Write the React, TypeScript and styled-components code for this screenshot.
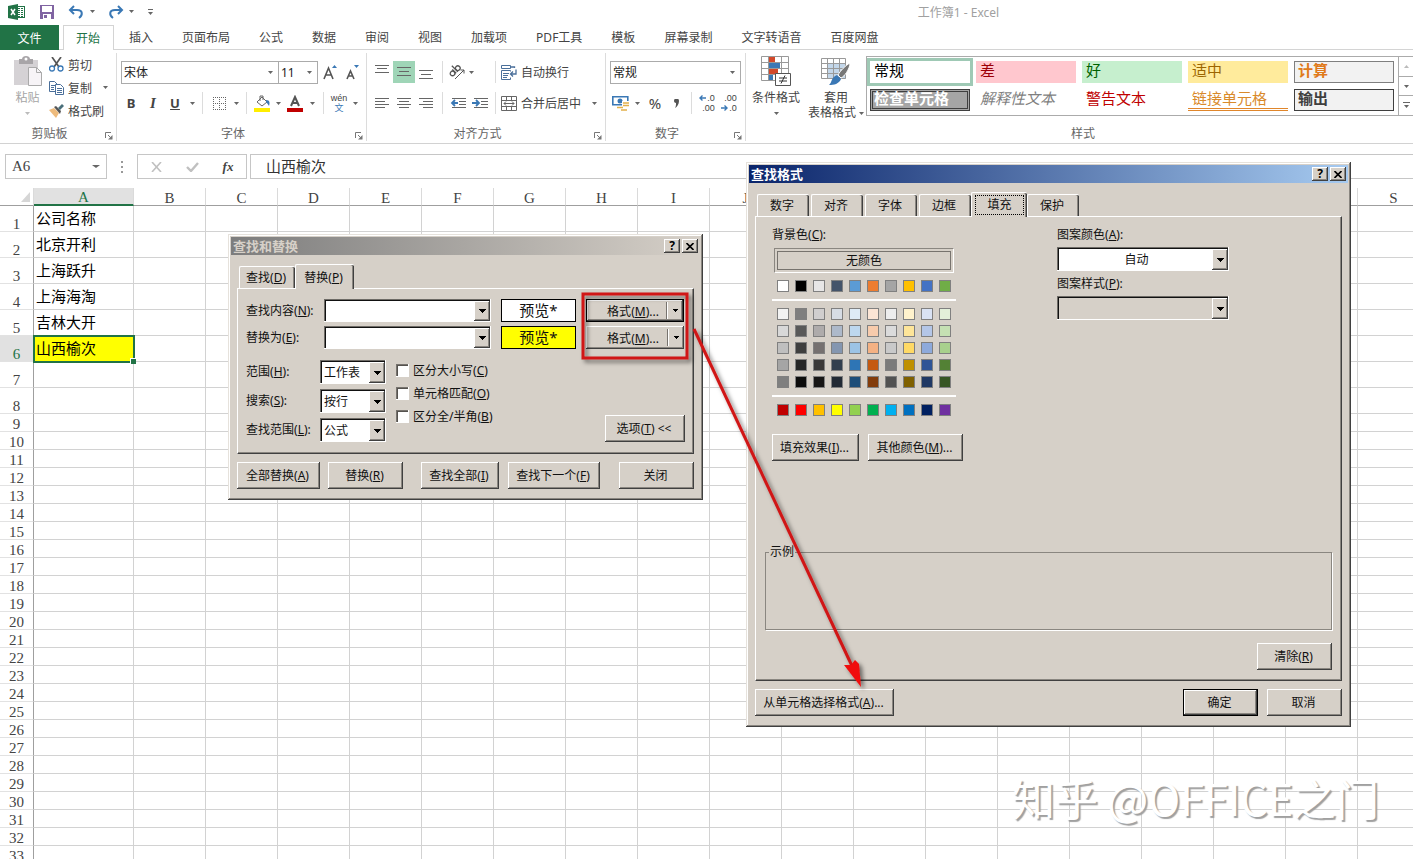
import React from "react";
import styled, { createGlobalStyle, css } from "styled-components";

const UI = `"Noto Sans", "Noto Sans CJK SC", sans-serif`;
const CELL = `"Liberation Serif", "Noto Sans CJK SC", serif`;
const FACE = "#d6d0c8";

const Global = createGlobalStyle`
  *, *::before, *::after { box-sizing: border-box; }
  body { margin: 0; background: #fff; font-family: ${UI}; font-size: 12px; color: #444; }
  button, input, select { font: inherit; color: inherit; margin: 0; border-radius: 0; }
`;

const raised = css`
  box-shadow: inset -1px -1px #404040, inset 1px 1px #fff, inset -2px -2px #8a8680;
`;
const sunken = css`
  box-shadow: inset -1px -1px #fff, inset 1px 1px #6e6b66, inset 2px 2px #111;
`;

const Page = styled.main`
  position: relative;
  height: 100vh;
  overflow: hidden;
`;

/* ---------- title bar ---------- */
const TitleBar = styled.header`
  display: flex;
  align-items: center;
  height: 25px;
  padding: 0 0 2px 8px;
`;
const QuickButton = styled.button<{ $w: number; $gap?: number }>`
  display: flex;
  justify-content: center;
  align-items: center;
  width: ${(p) => p.$w}px;
  height: 20px;
  margin-left: ${(p) => p.$gap ?? 0}px;
  padding: 0;
  border: 0;
  background: none;
`;
const BookTitle = styled.h1`
  flex: 1;
  margin: 0;
  padding-left: 348px;
  text-align: center;
  font-size: 12px;
  font-weight: 400;
  color: #a0a0a0;
`;

/* ---------- ribbon tabs ---------- */
const TabRow = styled.nav`
  display: flex;
  height: 25px;
  border-bottom: 1px solid #d4d4d4;
`;
const FileTab = styled.button`
  width: 59px;
  height: 25px;
  margin-right: 4px;
  border: 0;
  background: #217346;
  color: #fff;
`;
const RibbonTab = styled.button<{ $active?: boolean }>`
  flex: none;
  height: 24px;
  padding: 0 14px 0 15px;
  border: 0;
  background: #fff;
  white-space: nowrap;
  ${(p) =>
    p.$active &&
    css`
      height: 25px;
      padding: 0 12px 0 11px;
      width: 51px;
      border: 1px solid #d4d4d4;
      border-bottom: 0;
      color: #217346;
    `}
`;

/* ---------- ribbon ---------- */
const Ribbon = styled.section`
  display: flex;
  height: 94px;
  padding: 3px 0 2px;
  border-bottom: 1px solid #d2d2d2;
  overflow: hidden;
`;
const Group = styled.section<{ $w?: number }>`
  display: flex;
  flex-direction: column;
  flex: ${(p) => (p.$w ? `0 0 ${p.$w}px` : "1 0 667px")};
  border-right: ${(p) => (p.$w ? 1 : 0)}px solid #dcdcdc;
`;
const GroupBody = styled.div<{ $pad: string; $column?: boolean }>`
  display: flex;
  flex: 1;
  flex-direction: ${(p) => (p.$column ? "column" : "row")};
  gap: ${(p) => (p.$column ? 9 : 0)}px;
  padding: ${(p) => p.$pad};
`;
const GroupFoot = styled.footer`
  display: flex;
  align-items: center;
  height: 16px;
  padding-right: 3px;
  color: #666;
`;
const GroupName = styled.h2<{ $launch: boolean }>`
  flex: 1;
  margin: 0;
  padding: ${(p) => (p.$launch ? "1px 6px 0 0" : "1px 0 0 10px")};
  text-align: center;
  font-size: 12px;
  line-height: 16px;
  font-weight: 400;
`;
const LaunchButton = styled.button`
  display: flex;
  width: 8px;
  height: 8px;
  margin-bottom: 1px;
  padding: 0;
  border: 0;
  background: none;
  align-self: flex-end;
`;
const ToolRow = styled.div`
  display: flex;
  align-items: center;
  height: 22px;
`;
const Tool = styled.button<{ $w: number; $on?: boolean }>`
  display: flex;
  align-items: center;
  justify-content: center;
  flex: none;
  width: ${(p) => p.$w}px;
  height: 22px;
  padding: 0;
  border: 0;
  background: ${(p) => (p.$on ? "#9fd5b7" : "none")};
`;
const Letter = styled.span<{ $bold?: boolean; $italic?: boolean; $under?: boolean; $size?: number }>`
  font: ${(p) => (p.$italic ? "italic" : "normal")} ${(p) => (p.$bold ? 700 : 400)} ${(p) => p.$size ?? 13}px
    ${(p) => (p.$italic ? `"Liberation Serif", serif` : UI)};
  text-decoration: ${(p) => (p.$under ? "underline" : "none")};
`;
const Split = styled.span<{ $w: number; $gap?: number }>`
  flex: none;
  width: ${(p) => p.$w}px;
  height: 22px;
  margin-left: ${(p) => p.$gap ?? 0}px;
  background: linear-gradient(#dcdcdc, #dcdcdc) center / 1px 100% no-repeat;
`;
const LabelTool = styled.button`
  display: flex;
  align-items: center;
  gap: 4px;
  height: 23px;
  padding: 0 0 0 2px;
  border: 0;
  background: none;
  white-space: nowrap;
`;
const Stack = styled.div`
  display: flex;
  flex-direction: column;
`;
const BigTool = styled.button<{ $w: number; $dim?: boolean }>`
  display: flex;
  flex-direction: column;
  align-items: center;
  width: ${(p) => p.$w}px;
  padding: ${(p) => (p.$dim ? 3 : 0)}px 0 0;
  border: 0;
  background: none;
  line-height: 16px;
  color: ${(p) => (p.$dim ? "#a6a6a6" : "#444")};
  & > svg:first-child {
    margin-bottom: 4px;
  }
`;
const CaretLine = styled.span`
  display: flex;
  align-items: center;
  justify-content: center;
  gap: 3px;
  height: 14px;
  white-space: nowrap;
`;
const FlatCombo = styled.span<{ $w: number }>`
  display: grid;
  align-items: center;
  width: ${(p) => p.$w}px;
  height: 23px;
  margin-right: -1px;
  border: 1px solid #ababab;
  & > * {
    grid-area: 1 / 1;
  }
  & > svg {
    justify-self: end;
    margin-right: 5px;
    pointer-events: none;
  }
`;
const FlatSelect = styled.select`
  appearance: none;
  width: 100%;
  height: 21px;
  padding: 0 2px;
  border: 0;
  background: #fff;
  color: #222;
`;

const Gallery = styled.div`
  display: flex;
  flex: 1;
  height: 60px;
  border: 1px solid #ababab;
  border-right: 0;
`;
const GalleryGrid = styled.div`
  display: grid;
  flex: 1;
  grid-template-columns: repeat(5, 100px);
  grid-auto-rows: 22px;
  gap: 6px;
  padding: 4px 3px;
`;
const StyleCell = styled.button<{ $bg?: string; $fg: string; $bold?: boolean; $italic?: boolean; $frame?: string }>`
  padding: 0 0 0 4px;
  border: 0;
  background: ${(p) => p.$bg ?? "#fff"};
  color: ${(p) => p.$fg};
  font-size: 15px;
  font-weight: ${(p) => (p.$bold ? 700 : 400)};
  font-style: ${(p) => (p.$italic ? "italic" : "normal")};
  line-height: 18px;
  text-align: left;
  display: flex;
  ${(p) => p.$frame}
`;
const GalleryScroll = styled.div`
  display: flex;
  flex-direction: column;
  width: 15px;
  border-left: 1px solid #ababab;
`;
const ScrollButton = styled.button`
  display: flex;
  flex: 1;
  align-items: center;
  justify-content: center;
  padding: 0;
  border: 0;
  background: #fff;
  & + & {
    border-top: 1px solid #ababab;
  }
`;

/* ---------- formula bar ---------- */
const FormulaBar = styled.section`
  display: flex;
  height: 44px;
  padding: 10px 0 9px 5px;
`;
const NameBox = styled.div`
  display: flex;
  align-items: center;
  width: 102px;
  height: 25px;
  padding-right: 6px;
  border: 1px solid #c6c6c6;
`;
const NameInput = styled.input`
  flex: 1;
  min-width: 0;
  padding: 0 0 0 6px;
  border: 0;
  font: 15px ${CELL};
  color: #444;
`;
const Dots = styled.span`
  width: 30px;
  height: 25px;
  display: flex;
  align-items: center;
  justify-content: center;
`;
const FormulaTools = styled.div`
  display: flex;
  align-items: center;
  width: 110px;
  height: 25px;
  margin-right: 3px;
  border: 1px solid #c6c6c6;
`;
const FormulaInput = styled.input`
  flex: 1;
  min-width: 0;
  height: 25px;
  padding: 0 0 2px 15px;
  border: 1px solid #c6c6c6;
  border-right: 0;
  font: 15px ${CELL};
  color: #333;
`;

/* ---------- sheet ---------- */
const SheetView = styled.div`
  overflow: hidden;
`;
const Grid = styled.table`
  table-layout: fixed;
  width: 1430px;
  border-collapse: separate;
  border-spacing: 0;
  font: 15px ${CELL};
`;
const ColHead = styled.th<{ $on?: boolean }>`
  height: 18px;
  padding: 2px 0 0;
  border-right: 1px solid #dadada;
  border-bottom: ${(p) => (p.$on ? "2px solid #217346" : "1px solid #9f9f9f")};
  background: ${(p) => (p.$on ? "#e1e1e1" : "#fff")};
  color: ${(p) => (p.$on ? "#217346" : "#444")};
  font-weight: 400;
  line-height: 14px;
`;
const Corner = styled.th`
  height: 18px;
  padding: 0 3px 0 0;
  border-right: 1px solid #dadada;
  border-bottom: 1px solid #9f9f9f;
  text-align: right;
  line-height: 0;
`;
const RowHead = styled.th<{ $on?: boolean; $h: number }>`
  height: ${(p) => p.$h}px;
  padding: 0;
  border-right: 1px solid #9f9f9f;
  border-bottom: 1px solid #e2e2e2;
  background: ${(p) => (p.$on ? "#e1e1e1" : "#fff")};
  color: ${(p) => (p.$on ? "#217346" : "#444")};
  font-weight: 400;
  line-height: 13px;
  vertical-align: bottom;
  text-align: center;
`;
const Cell = styled.td<{ $on?: boolean }>`
  position: relative;
  padding: 1px 0 0 2px;
  border-right: 1px solid #d2d2d2;
  border-bottom: 1px solid #d2d2d2;
  color: #000;
  line-height: 16px;
  white-space: nowrap;
  ${(p) =>
    p.$on &&
    css`
      background: #ff0;
      outline: 2px solid #217346;
      outline-offset: -1px;
      z-index: 1;
      &::after {
        content: "";
        position: absolute;
        right: -3px;
        bottom: -3px;
        width: 6px;
        height: 6px;
        background: #217346;
        border: solid #fff;
        border-width: 1px 0 0 1px;
      }
    `}
`;

/* ---------- classic dialogs ---------- */
const Dialog = styled.section<{ $x: number; $y: number; $w: number }>`
  position: absolute;
  z-index: 2;
  left: ${(p) => p.$x}px;
  top: ${(p) => p.$y}px;
  width: ${(p) => p.$w}px;
  padding: 3px;
  background: ${FACE};
  color: #111;
  box-shadow: inset -1px -1px #404040, inset 1px 1px #e6e2dc, inset -2px -2px #8a8680, inset 2px 2px #fff;
`;
const Caption = styled.header<{ $active?: boolean }>`
  display: flex;
  align-items: center;
  gap: 2px;
  height: 18px;
  padding: 0 2px;
  background: ${(p) =>
    p.$active ? "linear-gradient(90deg, #0a246a, #a6caf0)" : `linear-gradient(90deg, #7d7d7d, ${FACE})`};
  color: ${(p) => (p.$active ? "#fff" : FACE)};
`;
const CaptionText = styled.h2`
  flex: 1;
  margin: 0;
  font-size: 13px;
  font-weight: 700;
  line-height: 18px;
`;
const CaptionButton = styled.button`
  display: flex;
  align-items: center;
  justify-content: center;
  width: 16px;
  height: 14px;
  padding: 0;
  border: 0;
  background: ${FACE};
  color: #000;
  font-weight: 700;
  line-height: 14px;
  ${raised}
`;
const DialogBody = styled.div`
  padding: 9px 6px 8px;
`;
const DialogTabs = styled.div`
  display: flex;
  align-items: flex-end;
  height: 24px;
`;
const DialogTab = styled.button<{ $w: number; $active?: boolean }>`
  position: relative;
  width: ${(p) => p.$w}px;
  height: 22px;
  margin-left: 2px;
  padding: 0 3px 1px 0;
  border: solid #fff;
  border-width: 1px 0 0 1px;
  border-radius: 2px 2px 0 0;
  background: ${FACE};
  box-shadow: inset -1px 0 #404040, inset -2px 0 #8a8680;
  ${(p) =>
    p.$active &&
    css`
      z-index: 1;
      height: 25px;
      margin: 0 -2px -1px 0;
    `}
`;
const FocusFrame = styled.span`
  display: block;
  margin: 0 0 0 3px;
  border: 1px dotted #000;
  line-height: 18px;
`;
const Panel = styled.div<{ $pad: string }>`
  padding: ${(p) => p.$pad};
  border: 1px solid #fff;
  border-color: #fff #404040 #404040 #fff;
  box-shadow: inset -1px -1px #8a8680;
`;
const PushButton = styled.button<{ $w: number; $gap?: number; $default?: boolean }>`
  flex: none;
  width: ${(p) => p.$w}px;
  height: 27px;
  margin-left: ${(p) => p.$gap ?? 0}px;
  padding: 0 2px 1px 0;
  border: ${(p) => (p.$default ? "1px solid #000" : "0")};
  background: ${FACE};
  white-space: nowrap;
  ${raised}
`;
const FooterRow = styled.footer`
  display: flex;
  padding-top: 8px;
`;
const Push = styled.span`
  flex: 1;
`;
const FieldRow = styled.div`
  display: flex;
  align-items: center;
  height: 23px;
  & + & {
    margin-top: 4px;
  }
`;
const FieldLabel = styled.label<{ $w?: number }>`
  width: ${(p) => (p.$w ? `${p.$w}px` : "auto")};
  line-height: 18px;
  white-space: nowrap;
`;
const Well = styled.span<{ $w: number; $h: number; $bg?: string }>`
  display: grid;
  width: ${(p) => p.$w}px;
  height: ${(p) => p.$h}px;
  padding: 2px 1px 1px 2px;
  background: ${(p) => p.$bg ?? "#fff"};
  ${sunken}
  & > * {
    grid-area: 1 / 1;
  }
`;
const WellInput = styled.input`
  min-width: 0;
  width: 100%;
  border: 0;
  padding: 0 18px 0 2px;
  background: transparent;
`;
const WellSelect = styled.select<{ $center?: boolean }>`
  appearance: none;
  min-width: 0;
  width: 100%;
  border: 0;
  padding: 0 16px 0 2px;
  background: transparent;
  text-align: ${(p) => (p.$center ? "center" : "left")};
  text-align-last: ${(p) => (p.$center ? "center" : "left")};
`;
const DropArrow = styled.span`
  display: flex;
  align-items: center;
  justify-content: center;
  justify-self: end;
  width: 16px;
  background: ${FACE};
  pointer-events: none;
  ${raised}
`;
const Preview = styled.output<{ $bg: string }>`
  width: 75px;
  height: 23px;
  margin: 0 10px;
  border: 1px solid #000;
  background: ${(p) => p.$bg};
  font-size: 15px;
  line-height: 20px;
  text-align: center;
`;
const FormatButton = styled.button<{ $focus?: boolean }>`
  display: flex;
  align-items: center;
  width: 98px;
  height: 23px;
  padding: 0;
  border: ${(p) => (p.$focus ? "1px solid #000" : "0")};
  background: ${FACE};
  ${raised}
`;
const FormatText = styled.span`
  flex: 1;
  padding-left: 13px;
  white-space: nowrap;
`;
const FormatDrop = styled.span`
  display: flex;
  align-items: center;
  justify-content: center;
  width: 17px;
  height: 17px;
  border-left: 1px solid #77736e;
  box-shadow: inset 1px 0 #fff;
`;
const Options = styled.div`
  display: flex;
  margin-top: 11px;
`;
const OptionFields = styled.div`
  display: grid;
  grid-template-columns: 74px 66px;
  grid-auto-rows: 24px;
  gap: 5px 0;
  align-items: center;
`;
const Checks = styled.div`
  display: flex;
  flex: 1;
  flex-direction: column;
  gap: 3px;
  padding-left: 10px;
`;
const CheckLabel = styled.label`
  display: flex;
  align-items: center;
  gap: 4px;
  height: 20px;
`;
const Check = styled.input`
  appearance: none;
  width: 13px;
  height: 13px;
  background: #fff;
  box-shadow: inset -1px -1px #fff, inset 1px 1px #77736e, inset 2px 2px #55524e;
`;
const OptionAction = styled.div`
  display: flex;
  align-items: flex-end;
`;

/* ---------- fill page ---------- */
const FillColumns = styled.div`
  display: flex;
  padding-left: 7px;
`;
const FillColumn = styled.div<{ $w: number }>`
  display: flex;
  flex-direction: column;
  width: ${(p) => p.$w}px;
`;
const NoColor = styled.button`
  width: 180px;
  height: 25px;
  margin: 4px 0 0 2px;
  padding: 2px;
  border: 1px solid #8a8680;
  border-color: #8a8680 #fff #fff #8a8680;
  background: ${FACE};
`;
const NoColorText = styled.span`
  display: block;
  border: 1px solid #77736e;
  line-height: 17px;
`;
const Swatches = styled.div`
  display: grid;
  grid-template-columns: repeat(10, 12px);
  grid-auto-rows: 12px;
  gap: 5px 6px;
  padding: 7px 5px;
`;
const Swatch = styled.button<{ $c: string }>`
  padding: 0;
  border: 1px solid #808080;
  background: ${(p) => p.$c};
`;
const Rule = styled.hr`
  width: 184px;
  height: 2px;
  margin: 0;
  border: 0;
  background: #fff;
`;
const ButtonRow = styled.div<{ $top: number; $end?: boolean }>`
  display: flex;
  justify-content: ${(p) => (p.$end ? "flex-end" : "flex-start")};
  margin-top: ${(p) => p.$top}px;
`;
const PatternLabel = styled.label`
  line-height: 18px;
  & + span {
    margin-top: 3px;
  }
  span + & {
    margin-top: 4px;
  }
`;
const Sample = styled.fieldset`
  height: 86px;
  margin: 83px 0 0;
  padding: 0;
  border: 1px solid #8a8680;
  box-shadow: 1px 1px #fff;
`;
const SampleName = styled.legend`
  margin-left: 3px;
  padding: 0 1px;
  line-height: 16px;
`;

/* ---------- annotations ---------- */
const Marks = styled.svg`
  position: absolute;
  z-index: 3;
  left: 570px;
  top: 280px;
  pointer-events: none;
`;
const Watermark = styled.p`
  position: absolute;
  z-index: 1;
  right: 34px;
  bottom: 32px;
  margin: 0;
  font: 400 43px / 60px "Noto Sans CJK SC", sans-serif;
  color: #fff;
  text-shadow: 2px 2px 1px #a0a0a0;
  white-space: nowrap;
`;

/* ---------- glyphs ---------- */
const Caret = ({ fill = "#666", w = 5 }: { fill?: string; w?: number }) => (
  <svg width={w} height="3" viewBox="0 0 6 3" preserveAspectRatio="none" aria-hidden="true">
    <path d="M0 0h6L3 3z" fill={fill} />
  </svg>
);
const DropTriangle = () => (
  <svg width="7" height="4" aria-hidden="true" shapeRendering="crispEdges">
    <path d="M0 0h7L3.500 4z" fill="#000" />
  </svg>
);
const SmallTriangle = () => (
  <svg width="5" height="3" aria-hidden="true" shapeRendering="crispEdges">
    <path d="M0 0h5L2.500 3z" fill="#000" />
  </svg>
);
const ExcelLogo = () => (
  <svg width="17" height="16" viewBox="0 0 17 16">
    <rect x="8.500" y="2.500" width="8" height="11" fill="#fff" stroke="#217346" />
    <path d="M10 4.500h2M13 4.500h2M10 6.500h2M13 6.500h2M10 8.500h2M13 8.500h2M10 10.500h2M13 10.500h2M10 12.500h2M13 12.500h2" stroke="#217346" />
    <path d="M0 2l10-2v16L0 14z" fill="#217346" />
    <path d="M3 5l4 6M7 5l-4 6" stroke="#fff" strokeWidth="1.500" />
  </svg>
);
const SaveIcon = () => (
  <svg width="14" height="14" viewBox="0 0 14 14">
    <path d="M0 0h14v14H0z" fill="#8064a2" />
    <path d="M2 1h10v6H2z" fill="#fff" />
    <path d="M3 9h8v5H3z" fill="#fff" />
    <path d="M4 10h3v3H4z" fill="#8064a2" />
  </svg>
);
const UndoIcon = () => (
  <svg width="16" height="14" viewBox="0 0 16 14" fill="none" stroke="#3a78b5" strokeWidth="2">
    <path d="M6 1L2 5l4 4M2 5h7c6 0 6 5 2 8" />
  </svg>
);
const RedoIcon = () => (
  <svg width="16" height="14" viewBox="0 0 16 14" fill="none" stroke="#3a78b5" strokeWidth="2">
    <path d="M10 1l4 4-4 4M14 5H7C1 5 1 10 5 13" />
  </svg>
);
const PasteIcon = () => (
  <svg width="28" height="30" viewBox="0 0 28 30">
    <path d="M0 4h24v25H0z" fill="#d5d2d5" />
    <path d="M5 3h3c0-4 8-4 8 0h3v5H5z" fill="#a8a5a8" />
    <circle cx="12" cy="3" r="1.500" fill="#fff" />
    <path d="M14.500 11.500h8l5 5v13h-13z" fill="#f7f4f7" stroke="#aaa" />
    <path d="M22.500 11.500v5h5" fill="none" stroke="#aaa" />
  </svg>
);
const CutIcon = () => (
  <svg width="15" height="15" viewBox="0 0 15 15" fill="none">
    <path d="M3 0l7 10M12 0L5 10" stroke="#555" strokeWidth="1.700" />
    <circle cx="3" cy="11.500" r="2.500" stroke="#3a78b5" strokeWidth="1.300" />
    <circle cx="11.500" cy="11.500" r="2.500" stroke="#3a78b5" strokeWidth="1.300" />
  </svg>
);
const CopyIcon = () => (
  <svg width="15" height="14" viewBox="0 0 15 14" fill="#fff" stroke="#4a6f9a">
    <path d="M.5.5h5l3 3v7h-8z" />
    <path d="M2 4.500h4M2 6.500h3M2 8.500h3" />
    <path d="M6.500 3.500h5l3 3v7h-8z" />
    <path d="M8 7.500h5M8 9.500h5M8 11.500h5" />
  </svg>
);
const BrushIcon = () => (
  <svg width="15" height="14" viewBox="0 0 15 14">
    <path d="M0 6l5-2 5 5-3 5z" fill="#eebb7d" />
    <path d="M5 3l2-1 5 5-1 3z" fill="#555" />
    <path d="M9 4l4-4 2 2-4 4z" fill="#4a6f7a" />
  </svg>
);
const Launcher = () => (
  <svg width="8" height="8" viewBox="0 0 8 8" fill="none" stroke="#777">
    <path d="M.5 6V.5H6M3 3l3 3" />
    <path d="M7.500 3v4.500H3z" fill="#777" stroke="none" />
  </svg>
);
const ResizeA = ({ up }: { up?: boolean }) => (
  <svg width="15" height="16" viewBox="0 0 15 16">
    <path d={up ? "M1 15L5.500 4 10 15M3 11h5" : "M2 15l3.500-8L9 15M3.500 12h4"} fill="none" stroke="#555" strokeWidth="1.600" />
    <path d={up ? "M9 4h5l-2.500-3z" : "M9 1h5l-2.500 3z"} fill="#3a78b5" />
  </svg>
);
const BordersIcon = () => (
  <svg width="13" height="13" viewBox="0 0 13 13" stroke="#666" strokeDasharray="1 1" fill="none">
    <path d="M0 .5h13M0 6.500h13M0 12.500h13M.5 0v13M6.500 0v13M12.500 0v13" />
  </svg>
);
const FillIcon = () => (
  <svg width="17" height="17" viewBox="0 0 17 17">
    <path d="M3 7l5-5 5 5-5 4z" fill="#fff" stroke="#666" />
    <path d="M6 6V1h3v4" fill="none" stroke="#666" />
    <path d="M12 5c4 0 4 3 3 6-1-2-2-3-3-4z" fill="#3a78b5" />
    <path d="M0 13h16v4H0z" fill="#ffee00" />
  </svg>
);
const FontColorIcon = () => (
  <svg width="16" height="17" viewBox="0 0 16 17">
    <path d="M4 11l4-9 4 9M5.500 8h5" fill="none" stroke="#555" strokeWidth="2" />
    <path d="M0 13h16v4H0z" fill="#c00000" />
  </svg>
);
const Phonetic = styled.span`
  display: flex;
  flex-direction: column;
  align-items: center;
  font: 9px / 10px "Liberation Sans", "Noto Sans CJK SC", sans-serif;
  & > b {
    color: #3a78b5;
    font-weight: 400;
  }
`;
const Lines = ({ rows, w = 14, h = 14 }: { rows: number[][]; w?: number; h?: number }) => (
  <svg width={w} height={h} stroke="#666" aria-hidden="true">
    {rows.map(([x, y, l]) => (
      <path key={y} d={`M${x} ${y + 0.5}h${l}`} />
    ))}
  </svg>
);
const OrientIcon = () => (
  <svg width="17" height="16" viewBox="0 0 17 16" fill="none" stroke="#555">
    <g transform="rotate(-45 6 7)" strokeWidth="1.300">
      <circle cx="2.500" cy="7" r="2.300" />
      <path d="M5.200 4v5.500M7.500 1v8.500" />
      <circle cx="10" cy="7" r="2.300" />
    </g>
    <path d="M6 15l9-9M11.500 6H15v3.500" />
  </svg>
);
const IndentIcon = ({ out }: { out?: boolean }) => (
  <svg width="17" height="12" viewBox="0 0 17 12" fill="none" stroke="#666">
    <path d="M2 1.500h14M9 4.500h7M9 7.500h7M2 10.500h14" />
    <path d={out ? "M8 6H2M5 3L2 6l3 3" : "M0 6h6M4 3l3 3-3 3"} stroke="#3a78b5" strokeWidth="1.800" />
  </svg>
);
const WrapIcon = () => (
  <svg width="16" height="15" viewBox="0 0 16 15" fill="none" stroke="#4a6f9a">
    <path d="M.5.500h9v3h-9zM9.500 6.500v-1h-9v9h9v-2M2 8.500h6M2 10.500h5M2 12.500h4" />
    <path d="M9.500 2h4v1M15 4.500v4.500h-5M12 6.500L9.500 9l2.500 2.500" strokeWidth="1.300" />
  </svg>
);
const MergeIcon = () => (
  <svg width="16" height="15" viewBox="0 0 16 15" fill="none" stroke="#666">
    <path d="M.5.500h15v14H.5zM.5 4.500h15M.5 10.500h15M5.500.500v4M10.500.500v4M5.500 10.500v4M10.500 10.500v4" />
    <path d="M3 7.500h10M5 5.500l-2 2 2 2M11 5.500l2 2-2 2" />
  </svg>
);
const CurrencyIcon = () => (
  <svg width="18" height="16" viewBox="0 0 18 16">
    <path d="M.800 1.800h15v8h-15z" fill="#fff" stroke="#3a78b5" strokeWidth="1.600" />
    <circle cx="8" cy="6" r="2.500" fill="#3a78b5" />
    <path d="M10 6h7v10H6v-5h4z" fill="#fff" />
    <path d="M11 8h6M11 10.500h6M5 12.500h6M9 15h6" stroke="#e2b04a" strokeWidth="1.700" />
  </svg>
);
const Decimal = styled.span`
  display: flex;
  flex-direction: column;
  align-items: flex-end;
  font: 9px / 10px "Liberation Sans", sans-serif;
  & > span {
    display: flex;
    align-items: center;
    gap: 1px;
  }
`;
const Arrow = ({ right }: { right?: boolean }) => (
  <svg width="7" height="6" fill="none" stroke="#3a78b5" strokeWidth="1.400">
    <path d={right ? "M0 3h6M3.500.500L6 3 3.500 5.500" : "M7 3H1M3.500.500L1 3l2.500 2.500"} />
  </svg>
);
const ConditionalIcon = () => (
  <svg width="30" height="30" viewBox="0 0 30 30">
    <path d="M.5.500h27v24H.5z" fill="#fff" />
    <path d="M8 1h6v5H8zM8 13h9v5H8z" fill="#d2492a" />
    <path d="M8 7h11v5H8zM8 19h4v5H8z" fill="#3a78b5" />
    <path d="M.5.500h27v24H.5zM.5 6.500h27M.5 12.500h27M.5 18.500h27M7.500.500v24M20.500.500v24" fill="none" stroke="#999" />
    <path d="M14.500 17.500h15v12h-15z" fill="#fff" stroke="#555" />
    <path d="M18 22h8M18 25h8M24 19.500l-4 8" stroke="#333" />
  </svg>
);
const TableStyleIcon = () => (
  <svg width="30" height="30" viewBox="0 0 30 30">
    <path d="M.5 2.500h24v20H.5z" fill="#fff" />
    <path d="M7 8h18v15H7z" fill="#c3d7ea" />
    <path d="M.5 2.500h24v20H.5zM.5 7.500h24M.5 12.500h24M.5 17.500h24M6.500 2.500v20M12.500 2.500v20M18.500 2.500v20" fill="none" stroke="#999" />
    <path d="M29 7c0 6-6 14-9 15l-3-3c2-4 8-10 12-12z" fill="#777" stroke="#fff" />
    <path d="M16 19l4 4c-2 5-7 6-12 6 3-2 2-8 8-10z" fill="#3a78b5" />
  </svg>
);

/* ---------- data ---------- */
const TABS = ["插入", "页面布局", "公式", "数据", "审阅", "视图", "加载项", "PDF工具", "模板", "屏幕录制", "文字转语音", "百度网盘"];
const COLS = "ABCDEFGHIJKLMNOPQRS".split("");
const NAMES = ["公司名称", "北京开利", "上海跃升", "上海海淘", "吉林大开", "山西榆次"];
const THEME = ["#ffffff", "#000000", "#e7e6e6", "#44546a", "#5b9bd5", "#ed7d31", "#a5a5a5", "#ffc000", "#4472c4", "#70ad47"];
const TINTS = [
  "#f2f2f2", "#7f7f7f", "#d0cece", "#d6dce4", "#deebf6", "#fbe5d5", "#ededed", "#fff2cc", "#d9e2f3", "#e2efd9",
  "#d8d8d8", "#595959", "#aeabab", "#adb9ca", "#bdd7ee", "#f7cbac", "#dbdbdb", "#fee599", "#b4c6e7", "#c5e0b3",
  "#bfbfbf", "#3f3f3f", "#757070", "#8496b0", "#9cc3e5", "#f4b183", "#c9c9c9", "#ffd965", "#8eaadb", "#a8d08d",
  "#a5a5a5", "#262626", "#3a3838", "#323f4f", "#2e75b5", "#c55a11", "#7b7b7b", "#bf9000", "#2f5496", "#538135",
  "#7f7f7f", "#0c0c0c", "#171616", "#222a35", "#1e4e79", "#833c0b", "#525252", "#7f6000", "#1f3864", "#375623",
];
const STANDARD = ["#c00000", "#ff0000", "#ffc000", "#ffff00", "#92d050", "#00b050", "#00b0f0", "#0070c0", "#002060", "#7030a0"];
const STYLES = [
  { name: "常规", fg: "#000", frame: "box-shadow: 0 0 0 3px #9fc9b5;" },
  { name: "差", fg: "#9c0006", bg: "#ffc7ce" },
  { name: "好", fg: "#006100", bg: "#c6efce" },
  { name: "适中", fg: "#9c6500", bg: "#ffeb9c" },
  { name: "计算", fg: "#e07a1a", bg: "#f2f2f2", bold: true, frame: "box-shadow: inset 0 0 0 1px #7f7f7f;" },
  { name: "检查单元格", fg: "#fff", bg: "#a5a5a5", bold: true, frame: "box-shadow: inset 0 0 0 1px #3f3f3f, inset 0 0 0 2px #a5a5a5, inset 0 0 0 3px #3f3f3f;" },
  { name: "解释性文本", fg: "#7f7f7f", italic: true },
  { name: "警告文本", fg: "#c00000" },
  { name: "链接单元格", fg: "#d98a2b", frame: "box-shadow: inset 0 -1px #e0862b, inset 0 -2px #fff, inset 0 -3px #e0862b;" },
  { name: "输出", fg: "#3f3f3f", bg: "#f2f2f2", bold: true, frame: "box-shadow: inset 0 0 0 1px #3f3f3f;" },
];

const Key = ({ text, k, tail = "" }: { text: string; k: string; tail?: string }) => (
  <>
    {text}(<u>{k}</u>){tail}
  </>
);

const Foot = ({ name, launch = true }: { name: string; launch?: boolean }) => (
  <GroupFoot>
    <GroupName $launch={launch}>{name}</GroupName>
    {launch && (
      <LaunchButton aria-label={name}>
        <Launcher />
      </LaunchButton>
    )}
  </GroupFoot>
);

const DialogCaption = ({ title, active }: { title: string; active?: boolean }) => (
  <Caption $active={active}>
    <CaptionText>{title}</CaptionText>
    <CaptionButton>?</CaptionButton>
    <CaptionButton aria-label="关闭">
      <svg width="8" height="7" viewBox="0 0 8 7" stroke="#000" strokeWidth="1.600">
        <path d="M.5 0l7 7M7.500 0l-7 7" />
      </svg>
    </CaptionButton>
  </Caption>
);

const Combo = ({ id, w, h }: { id: string; w: number; h: number }) => (
  <Well $w={w} $h={h}>
    <WellInput id={id} />
    <DropArrow>
      <DropTriangle />
    </DropArrow>
  </Well>
);

const Picker = ({ id, value, w, bg, center }: { id: string; value: string; w: number; bg?: string; center?: boolean }) => (
  <Well $w={w} $h={24} $bg={bg}>
    <WellSelect id={id} $center={center}>
      <option>{value}</option>
    </WellSelect>
    <DropArrow>
      <DropTriangle />
    </DropArrow>
  </Well>
);

const RibbonView = () => (
  <Ribbon>
    <Group $w={117}>
      <GroupBody $pad="0 0 0 8px">
        <BigTool $w={39} $dim>
          <PasteIcon />
          <span>粘贴</span>
          <CaretLine>
            <Caret fill="#bbb" />
          </CaretLine>
        </BigTool>
        <Stack>
          <LabelTool>
            <CutIcon />
            剪切
          </LabelTool>
          <LabelTool>
            <CopyIcon />
            复制
            <Tool as="span" $w={18}>
              <Caret />
            </Tool>
          </LabelTool>
          <LabelTool>
            <BrushIcon />
            格式刷
          </LabelTool>
        </Stack>
      </GroupBody>
      <Foot name="剪贴板" />
    </Group>

    <Group $w={250}>
      <GroupBody $pad="8px 0 0 4px" $column>
        <ToolRow>
          <FlatCombo $w={158}>
            <FlatSelect aria-label="字体">
              <option>宋体</option>
            </FlatSelect>
            <Caret />
          </FlatCombo>
          <FlatCombo $w={40}>
            <FlatSelect aria-label="字号">
              <option>11</option>
            </FlatSelect>
            <Caret />
          </FlatCombo>
          <Tool $w={26} aria-label="增大字号">
            <ResizeA up />
          </Tool>
          <Tool $w={18} aria-label="减小字号">
            <ResizeA />
          </Tool>
        </ToolRow>
        <ToolRow>
          <Tool $w={20}>
            <Letter $bold>B</Letter>
          </Tool>
          <Tool $w={24}>
            <Letter $italic $bold $size={15}>
              I
            </Letter>
          </Tool>
          <Tool $w={20}>
            <Letter $bold $under>
              U
            </Letter>
          </Tool>
          <Tool $w={14}>
            <Caret />
          </Tool>
          <Split $w={6} />
          <Tool $w={28}>
            <BordersIcon />
          </Tool>
          <Tool $w={6}>
            <Caret />
          </Tool>
          <Split $w={14} />
          <Tool $w={18}>
            <FillIcon />
          </Tool>
          <Tool $w={14}>
            <Caret />
          </Tool>
          <Tool $w={20}>
            <FontColorIcon />
          </Tool>
          <Tool $w={14}>
            <Caret />
          </Tool>
          <Split $w={8} />
          <Tool $w={24}>
            <Phonetic>
              wén<b>文</b>
            </Phonetic>
          </Tool>
          <Tool $w={8}>
            <Caret />
          </Tool>
        </ToolRow>
      </GroupBody>
      <Foot name="字体" />
    </Group>

    <Group $w={239}>
      <GroupBody $pad="8px 0 0 4px" $column>
        <ToolRow>
          <Tool $w={22}>
            <Lines rows={[[0, 0, 14], [2, 3, 10], [0, 7, 14]]} />
          </Tool>
          <Tool $w={22} $on>
            <Lines rows={[[0, 2, 14], [2, 6, 10], [0, 10, 14]]} />
          </Tool>
          <Tool $w={22}>
            <Lines rows={[[0, 5, 14], [2, 9, 10], [0, 13, 14]]} />
          </Tool>
          <Split $w={10} />
          <Tool $w={20}>
            <OrientIcon />
          </Tool>
          <Tool $w={8}>
            <Caret />
          </Tool>
          <Split $w={8} $gap={16} />
          <LabelTool>
            <WrapIcon />
            自动换行
          </LabelTool>
        </ToolRow>
        <ToolRow>
          <Tool $w={22}>
            <Lines rows={[[0, 2, 14], [0, 5, 10], [0, 8, 14], [0, 11, 10]]} />
          </Tool>
          <Tool $w={22}>
            <Lines rows={[[0, 2, 14], [2, 5, 10], [0, 8, 14], [2, 11, 10]]} />
          </Tool>
          <Tool $w={22}>
            <Lines rows={[[0, 2, 14], [4, 5, 10], [0, 8, 14], [4, 11, 10]]} />
          </Tool>
          <Split $w={10} />
          <Tool $w={22}>
            <IndentIcon out />
          </Tool>
          <Tool $w={22}>
            <IndentIcon />
          </Tool>
          <Split $w={8} />
          <LabelTool>
            <MergeIcon />
            合并后居中
            <Tool as="span" $w={18}>
              <Caret />
            </Tool>
          </LabelTool>
        </ToolRow>
      </GroupBody>
      <Foot name="对齐方式" />
    </Group>

    <Group $w={140}>
      <GroupBody $pad="8px 0 0 4px" $column>
        <ToolRow>
          <FlatCombo $w={131}>
            <FlatSelect aria-label="数字格式">
              <option>常规</option>
            </FlatSelect>
            <Caret />
          </FlatCombo>
        </ToolRow>
        <ToolRow>
          <Tool $w={22}>
            <CurrencyIcon />
          </Tool>
          <Tool $w={10}>
            <Caret />
          </Tool>
          <Tool $w={26}>
            <Letter $size={15}>%</Letter>
          </Tool>
          <Tool $w={18}>
            <svg width="6" height="9" viewBox="0 0 6 9">
              <path d="M0 2a2.500 2.500 0 0 1 5 0c0 3-2 6-4 7 1-2 1-3 1-5-1 0-2-1-2-2z" fill="#555" />
            </svg>
          </Tool>
          <Split $w={10} />
          <Tool $w={22}>
            <Decimal>
              <span>
                <Arrow />
                .0
              </span>
              <span>.00</span>
            </Decimal>
          </Tool>
          <Tool $w={22}>
            <Decimal>
              <span>.00</span>
              <span>
                <Arrow right />
                .0
              </span>
            </Decimal>
          </Tool>
        </ToolRow>
      </GroupBody>
      <Foot name="数字" />
    </Group>

    <Group>
      <GroupBody $pad="3px 0 0 0">
        <BigTool $w={60}>
          <ConditionalIcon />
          <span>条件格式</span>
          <CaretLine>
            <Caret />
          </CaretLine>
        </BigTool>
        <BigTool $w={60}>
          <TableStyleIcon />
          <span>套用</span>
          <CaretLine>
            表格格式
            <Caret />
          </CaretLine>
        </BigTool>
        <Gallery>
          <GalleryGrid>
            {STYLES.map((s) => (
              <StyleCell key={s.name} $fg={s.fg} $bg={s.bg} $bold={s.bold} $italic={s.italic} $frame={s.frame}>
                {s.name}
              </StyleCell>
            ))}
          </GalleryGrid>
          <GalleryScroll>
            <ScrollButton aria-label="上一行">
              <svg width="5" height="3">
                <path d="M0 3h5L2.500 0z" fill="#bbb" />
              </svg>
            </ScrollButton>
            <ScrollButton aria-label="下一行">
              <Caret />
            </ScrollButton>
            <ScrollButton aria-label="其他">
              <svg width="7" height="7">
                <path d="M0 .500h7" stroke="#666" />
                <path d="M1 3h5L3.500 6z" fill="#666" />
              </svg>
            </ScrollButton>
          </GalleryScroll>
        </Gallery>
      </GroupBody>
      <Foot name="样式" launch={false} />
    </Group>
  </Ribbon>
);

const Sheet = () => (
  <SheetView>
    <Grid>
      <colgroup>
        <col width={34} />
        {COLS.map((c) => (
          <col key={c} width={c === "A" ? 100 : 72} />
        ))}
      </colgroup>
      <thead>
        <tr>
          <Corner aria-label="全选">
            <svg width="9" height="10">
              <path d="M9 0v10H0z" fill="#d6d6d6" />
            </svg>
          </Corner>
          {COLS.map((c) => (
            <ColHead key={c} scope="col" $on={c === "A"}>
              {c}
            </ColHead>
          ))}
        </tr>
      </thead>
      <tbody>
        {Array.from({ length: 33 }, (_, r) => (
          <tr key={r}>
            <RowHead scope="row" $h={r < 8 ? 26 : 18} $on={r === 5}>
              {r + 1}
            </RowHead>
            {COLS.map((c) => (
              <Cell key={c} $on={r === 5 && c === "A"}>
                {c === "A" ? NAMES[r] : null}
              </Cell>
            ))}
          </tr>
        ))}
      </tbody>
    </Grid>
  </SheetView>
);

const FindReplace = () => (
  <Dialog $x={228} $y={234} $w={475} role="dialog" aria-label="查找和替换">
    <DialogCaption title="查找和替换" />
    <DialogBody>
      <DialogTabs role="tablist">
        <DialogTab $w={56} role="tab">
          <Key text="查找" k="D" />
        </DialogTab>
        <DialogTab $w={59} $active role="tab" aria-selected="true">
          <Key text="替换" k="P" />
        </DialogTab>
      </DialogTabs>
      <Panel $pad="10px 8px 11px 8px">
        <FieldRow>
          <FieldLabel htmlFor="find" $w={78}>
            <Key text="查找内容" k="N" tail=":" />
          </FieldLabel>
          <Combo id="find" w={167} h={23} />
          <Preview $bg="#fff">预览*</Preview>
          <FormatButton $focus>
            <FormatText>
              <Key text="格式" k="M" tail="..." />
            </FormatText>
            <FormatDrop>
              <SmallTriangle />
            </FormatDrop>
          </FormatButton>
        </FieldRow>
        <FieldRow>
          <FieldLabel htmlFor="replace" $w={78}>
            <Key text="替换为" k="E" tail=":" />
          </FieldLabel>
          <Combo id="replace" w={167} h={23} />
          <Preview $bg="#ff0">预览*</Preview>
          <FormatButton>
            <FormatText>
              <Key text="格式" k="M" tail="..." />
            </FormatText>
            <FormatDrop>
              <SmallTriangle />
            </FormatDrop>
          </FormatButton>
        </FieldRow>
        <Options>
          <OptionFields>
            <FieldLabel htmlFor="within">
              <Key text="范围" k="H" tail=":" />
            </FieldLabel>
            <Picker id="within" value="工作表" w={66} />
            <FieldLabel htmlFor="search">
              <Key text="搜索" k="S" tail=":" />
            </FieldLabel>
            <Picker id="search" value="按行" w={66} />
            <FieldLabel htmlFor="lookin">
              <Key text="查找范围" k="L" tail=":" />
            </FieldLabel>
            <Picker id="lookin" value="公式" w={66} />
          </OptionFields>
          <Checks>
            <CheckLabel>
              <Check type="checkbox" />
              <span>
                <Key text="区分大小写" k="C" />
              </span>
            </CheckLabel>
            <CheckLabel>
              <Check type="checkbox" />
              <span>
                <Key text="单元格匹配" k="O" />
              </span>
            </CheckLabel>
            <CheckLabel>
              <Check type="checkbox" />
              <span>
                <Key text="区分全/半角" k="B" />
              </span>
            </CheckLabel>
          </Checks>
          <OptionAction>
            <PushButton $w={80}>
              <Key text="选项" k="T" tail=" <<" />
            </PushButton>
          </OptionAction>
        </Options>
      </Panel>
      <FooterRow>
        <PushButton $w={83}>
          <Key text="全部替换" k="A" />
        </PushButton>
        <PushButton $w={75} $gap={8}>
          <Key text="替换" k="R" />
        </PushButton>
        <PushButton $w={78} $gap={18}>
          <Key text="查找全部" k="I" />
        </PushButton>
        <PushButton $w={92} $gap={9}>
          <Key text="查找下一个" k="F" />
        </PushButton>
        <Push />
        <PushButton $w={75}>关闭</PushButton>
      </FooterRow>
    </DialogBody>
  </Dialog>
);

const Palette = ({ colors }: { colors: string[] }) => (
  <Swatches>
    {colors.map((c, i) => (
      <Swatch key={i} $c={c} aria-label={c} />
    ))}
  </Swatches>
);

const FindFormat = () => (
  <Dialog $x={746} $y={162} $w={605} role="dialog" aria-label="查找格式">
    <DialogCaption title="查找格式" active />
    <DialogBody>
      <DialogTabs role="tablist">
        {["数字", "对齐", "字体", "边框"].map((t) => (
          <DialogTab key={t} $w={52} role="tab">
            {t}
          </DialogTab>
        ))}
        <DialogTab $w={56} $active role="tab" aria-selected="true">
          <FocusFrame>填充</FocusFrame>
        </DialogTab>
        <DialogTab $w={52} role="tab">
          保护
        </DialogTab>
      </DialogTabs>
      <Panel $pad="9px 9px 10px 9px">
        <FillColumns>
          <FillColumn $w={285}>
            <FieldLabel as="span">
              <Key text="背景色" k="C" tail=":" />
            </FieldLabel>
            <NoColor>
              <NoColorText>无颜色</NoColorText>
            </NoColor>
            <Palette colors={THEME} />
            <Rule />
            <Palette colors={TINTS} />
            <Rule />
            <Palette colors={STANDARD} />
            <ButtonRow $top={11}>
              <PushButton $w={87}>
                <Key text="填充效果" k="I" tail="..." />
              </PushButton>
              <PushButton $w={95} $gap={9}>
                <Key text="其他颜色" k="M" tail="..." />
              </PushButton>
            </ButtonRow>
          </FillColumn>
          <FillColumn $w={172}>
            <PatternLabel htmlFor="pcolor">
              <Key text="图案颜色" k="A" tail=":" />
            </PatternLabel>
            <Picker id="pcolor" value="自动" w={172} center />
            <PatternLabel htmlFor="pstyle">
              <Key text="图案样式" k="P" tail=":" />
            </PatternLabel>
            <Picker id="pstyle" value="" w={172} bg={FACE} />
          </FillColumn>
        </FillColumns>
        <Sample>
          <SampleName>示例</SampleName>
        </Sample>
        <ButtonRow $top={13} $end>
          <PushButton $w={75}>
            <Key text="清除" k="R" />
          </PushButton>
        </ButtonRow>
      </Panel>
      <FooterRow>
        <PushButton $w={139}>
          <Key text="从单元格选择格式" k="A" tail="..." />
        </PushButton>
        <Push />
        <PushButton $w={75} $default>
          确定
        </PushButton>
        <PushButton $w={75} $gap={9}>
          取消
        </PushButton>
      </FooterRow>
    </DialogBody>
  </Dialog>
);

export default function App() {
  return (
    <>
      <Global />
      <Page>
        <TitleBar>
          <ExcelLogo />
          <QuickButton $w={16} $gap={14} aria-label="保存">
            <SaveIcon />
          </QuickButton>
          <QuickButton $w={16} $gap={13} aria-label="撤消">
            <UndoIcon />
          </QuickButton>
          <QuickButton $w={12} $gap={2} aria-label="撤消列表">
            <Caret />
          </QuickButton>
          <QuickButton $w={16} $gap={10} aria-label="恢复">
            <RedoIcon />
          </QuickButton>
          <QuickButton $w={12} $gap={1} aria-label="恢复列表">
            <Caret />
          </QuickButton>
          <QuickButton $w={12} $gap={7} aria-label="自定义">
            <svg width="7" height="6">
              <path d="M1 .500h5" stroke="#666" />
              <path d="M1 3h5L3.500 6z" fill="#666" />
            </svg>
          </QuickButton>
          <BookTitle>工作簿1 - Excel</BookTitle>
        </TitleBar>
        <TabRow>
          <FileTab>文件</FileTab>
          <RibbonTab $active>开始</RibbonTab>
          {TABS.map((t) => (
            <RibbonTab key={t}>{t}</RibbonTab>
          ))}
        </TabRow>
        <RibbonView />
        <FormulaBar>
          <NameBox>
            <NameInput aria-label="名称框" defaultValue="A6" />
            <Caret w={8} />
          </NameBox>
          <Dots>
            <svg width="2" height="12" fill="#999">
              <path d="M0 0h2v2H0zM0 5h2v2H0zM0 10h2v2H0z" />
            </svg>
          </Dots>
          <FormulaTools>
            <Tool $w={36} aria-label="取消">
              <svg width="11" height="10" stroke="#c0c0c0" strokeWidth="1.600">
                <path d="M1 0l9 10M10 0L1 10" />
              </svg>
            </Tool>
            <Tool $w={36} aria-label="输入">
              <svg width="13" height="10" stroke="#c0c0c0" strokeWidth="2.400" fill="none">
                <path d="M1 5l4 4 7-8" />
              </svg>
            </Tool>
            <Tool $w={36} aria-label="插入函数">
              <Letter $italic $bold>
                fx
              </Letter>
            </Tool>
          </FormulaTools>
          <FormulaInput aria-label="编辑栏" defaultValue="山西榆次" />
        </FormulaBar>
        <Sheet />
        <Watermark>知乎 @OFFICE之门</Watermark>
        <FindReplace />
        <FindFormat />
        <Marks width="310" height="420" viewBox="570 280 310 420" aria-hidden="true">
          <defs>
            <filter id="drop" x="-20%" y="-20%" width="140%" height="140%">
              <feDropShadow dx="3" dy="3" stdDeviation="2" floodColor="#000" floodOpacity="0.5" />
            </filter>
          </defs>
          <g filter="url(#drop)">
            <rect x="583" y="294" width="104" height="64" fill="none" stroke="#d01416" strokeWidth="3" />
            <path d="M694 329L852 666" stroke="#d01416" strokeWidth="3" />
            <path d="M861 687L844 665l7 0 4-5 4 4z" fill="#f00c0c" />
          </g>
        </Marks>
      </Page>
    </>
  );
}
